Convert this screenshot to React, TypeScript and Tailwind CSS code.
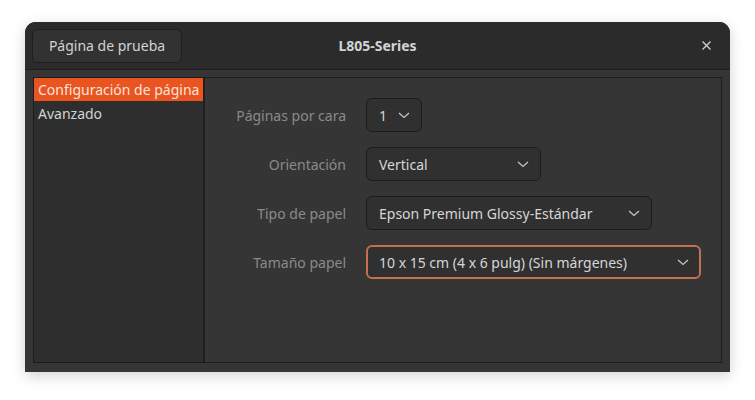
import React from 'react';

const Chevron = () => (
  <svg width="12" height="7" viewBox="0 0 12 7" className="shrink-0">
    <path d="M1 1l5 4.5L11 1" fill="none" stroke="#c8c8c8" strokeWidth="1.2" />
  </svg>
);

interface DropProps {
  value: string;
  width: string;
  focused?: boolean;
}

const Dropdown = ({ value, width, focused }: DropProps) => (
  <div
    className={`${width} h-[34px] flex items-center justify-between rounded-[6px] bg-[#303030] ${
      focused ? 'border-[2px] border-[#c4704e] pl-[11px] pr-[10px]' : 'border border-[#1c1c1c] pl-[12px] pr-[11px]'
    }`}
  >
    <span className="text-[#d6d6d6] whitespace-nowrap">{value}</span>
    <Chevron />
  </div>
);

const rows: { label: string; value: string; width: string; focused?: boolean }[] = [
  { label: 'Páginas por cara', value: '1', width: 'w-[56px]' },
  { label: 'Orientación', value: 'Vertical', width: 'w-[175px]' },
  { label: 'Tipo de papel', value: 'Epson Premium Glossy-Estándar', width: 'w-[286px]' },
  { label: 'Tamaño papel', value: '10 x 15 cm (4 x 6 pulg) (Sin márgenes)', width: 'w-[335px]', focused: true },
];

export default function App() {
  return (
    <div className="w-[755px] h-[400px] bg-white pl-[25px] pt-[22px]" style={{ fontFamily: '"Noto Sans", "Open Sans", sans-serif' }}>
      <div className="w-[705px] h-[350px] flex flex-col rounded-t-[11px] overflow-hidden bg-[#353535] shadow-[0_4px_14px_rgba(0,0,0,0.18)] text-[14px]">
        {/* Header bar */}
        <div className="h-[48px] shrink-0 bg-[#2b2b2b] border-b border-[#1f1f1f] grid grid-cols-[1fr_auto_1fr] items-center px-[7px]">
          <div>
            <button className="h-[34px] w-[150px] rounded-[6px] bg-[#323232] border border-[#1e1e1e] text-[#d3d3d3]">
              Página de prueba
            </button>
          </div>
          <div className="font-bold text-[#d3d3d3]">L805-Series</div>
          <div className="flex justify-end">
            <button className="w-[16px] h-[16px] flex items-center justify-center mr-[9px]">
              <svg width="9" height="9" viewBox="0 0 9 9">
                <path d="M0.5 0.5l8 8M8.5 0.5l-8 8" stroke="#d0d0d0" strokeWidth="1.3" />
              </svg>
            </button>
          </div>
        </div>

        {/* Body */}
        <div className="flex-1 pt-[7px] pl-[8px] pr-[8px] pb-[9px] flex">
          <div className="flex-1 flex border border-[#1c1c1c]">
            {/* Sidebar */}
            <div className="w-[171px] shrink-0 bg-[#2e2e2e] border-r-2 border-[#1f1f1f]">
              <div className="h-[23px] bg-[#e95420] text-[#fbe3d9] pl-[4px] flex items-center whitespace-nowrap">
                Configuración de página
              </div>
              <div className="h-[24px] text-[#d3d3d3] pl-[4px] flex items-center">Avanzado</div>
            </div>

            {/* Form */}
            <div className="flex-1 pt-[20px] flex flex-col gap-[15px]">
              {rows.map(r => (
                <div key={r.label} className="flex items-center">
                  <div className="w-[141px] text-right text-[#8a8a8a]">{r.label}</div>
                  <div className="ml-[20px]">
                    <Dropdown value={r.value} width={r.width} focused={r.focused} />
                  </div>
                </div>
              ))}
            </div>
          </div>
        </div>
      </div>
    </div>
  );
}
